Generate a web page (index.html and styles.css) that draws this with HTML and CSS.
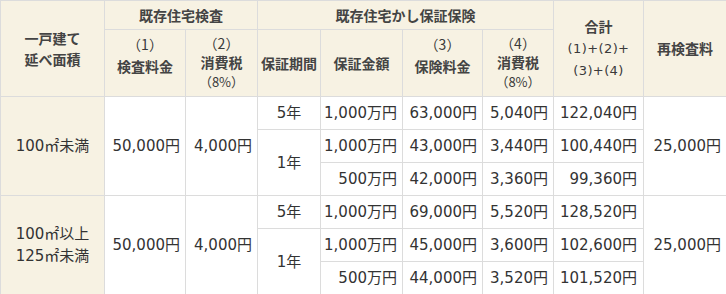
FILE: index.html
```html
<!DOCTYPE html>
<html lang="ja">
<head>
<meta charset="utf-8">
<link rel="stylesheet" href="styles.css">
</head>
<body>
<table class="fee">
  <colgroup>
    <col class="c1"><col class="c2"><col class="c3"><col class="c4"><col class="c5"><col class="c6"><col class="c7"><col class="c8"><col class="c9">
  </colgroup>
  <thead>
    <tr class="h1">
      <th rowspan="2" class="th-area">一戸建て<br>延べ面積</th>
      <th colspan="2">既存住宅検査</th>
      <th colspan="4">既存住宅かし保証保険</th>
      <th rowspan="2" class="th-total">合計<br><span class="formula">(1)+(2)+</span><br><span class="formula">(3)+(4)</span></th>
      <th rowspan="2">再検査料</th>
    </tr>
    <tr class="h2">
      <th class="two"><span class="num">（1）</span><br>検査料金</th>
      <th class="three"><span class="num">（2）</span><br>消費税<br><span class="pct">（8%）</span></th>
      <th>保証期間</th>
      <th>保証金額</th>
      <th class="two"><span class="num">（3）</span><br>保険料金</th>
      <th class="three"><span class="num">（4）</span><br>消費税<br><span class="pct">（8%）</span></th>
    </tr>
  </thead>
  <tbody>
    <tr>
      <td rowspan="3" class="area">100㎡未満</td>
      <td rowspan="3">50,000円</td>
      <td rowspan="3">4,000円</td>
      <td class="term">5年</td>
      <td>1,000万円</td>
      <td>63,000円</td>
      <td>5,040円</td>
      <td class="total">122,040円</td>
      <td rowspan="3">25,000円</td>
    </tr>
    <tr>
      <td rowspan="2" class="term">1年</td>
      <td>1,000万円</td>
      <td>43,000円</td>
      <td>3,440円</td>
      <td class="total">100,440円</td>
    </tr>
    <tr>
      <td>500万円</td>
      <td>42,000円</td>
      <td>3,360円</td>
      <td class="total">99,360円</td>
    </tr>
    <tr>
      <td rowspan="3" class="area">100㎡以上<br>125㎡未満</td>
      <td rowspan="3">50,000円</td>
      <td rowspan="3">4,000円</td>
      <td class="term">5年</td>
      <td>1,000万円</td>
      <td>69,000円</td>
      <td>5,520円</td>
      <td class="total">128,520円</td>
      <td rowspan="3">25,000円</td>
    </tr>
    <tr>
      <td rowspan="2" class="term">1年</td>
      <td>1,000万円</td>
      <td>45,000円</td>
      <td>3,600円</td>
      <td class="total">102,600円</td>
    </tr>
    <tr class="last">
      <td>500万円</td>
      <td>44,000円</td>
      <td>3,520円</td>
      <td class="total">101,520円</td>
    </tr>
  </tbody>
</table>
</body>
</html>
```

FILE: styles.css
```css
html, body {
  margin: 0;
  padding: 0;
  background: #ffffff;
}

.fee {
  width: 726px;
  table-layout: fixed;
  border-collapse: collapse;
  font-family: "DejaVu Sans", "Noto Sans CJK JP", sans-serif;
  color: #333333;
}

.c1 { width: 104px; }
.c2 { width: 81px; }
.c3 { width: 72px; }
.c4 { width: 63px; }
.c5 { width: 82px; }
.c6 { width: 80px; }
.c7 { width: 71px; }
.c8 { width: 90px; }
.c9 { width: 83px; }

.fee th,
.fee td {
  border: 1px solid #dcdcdc;
  padding: 0;
}

.fee th {
  background: #f7f2e3;
  font-family: "Noto Sans CJK JP", sans-serif;
  font-weight: bold;
  font-size: 14px;
  line-height: 21px;
  color: #444444;
  text-align: center;
  vertical-align: middle;
}

.h1 { height: 29px; }
.h2 { height: 67px; }

.fee th.two {
  vertical-align: top;
  padding-top: 3px;
  line-height: 22px;
}

.fee th.three {
  vertical-align: top;
  padding-top: 4px;
  line-height: 19px;
}

.num {
  font-weight: normal;
  color: #3a3a3a;
}

.pct {
  display: inline-block;
  font-size: 13px;
  font-weight: normal;
  line-height: 18px;
  color: #3a3a3a;
}

.formula {
  font-family: "DejaVu Sans", "Noto Sans CJK JP", sans-serif;
  font-size: 13px;
  font-weight: normal;
  letter-spacing: 0.4px;
  color: #3a3a3a;
}

.th-total {
  line-height: 21px;
}

.fee td {
  height: 32px;
  font-size: 15px;
  line-height: 20px;
  text-align: right;
  padding-right: 5px;
  white-space: nowrap;
}

.fee td.area {
  background: #f7f2e3;
  text-align: center;
  padding-right: 0;
  line-height: 22px;
}

.fee td.term {
  text-align: center;
  padding-right: 0;
}

.fee td.total {
  padding-right: 6px;
}
```
